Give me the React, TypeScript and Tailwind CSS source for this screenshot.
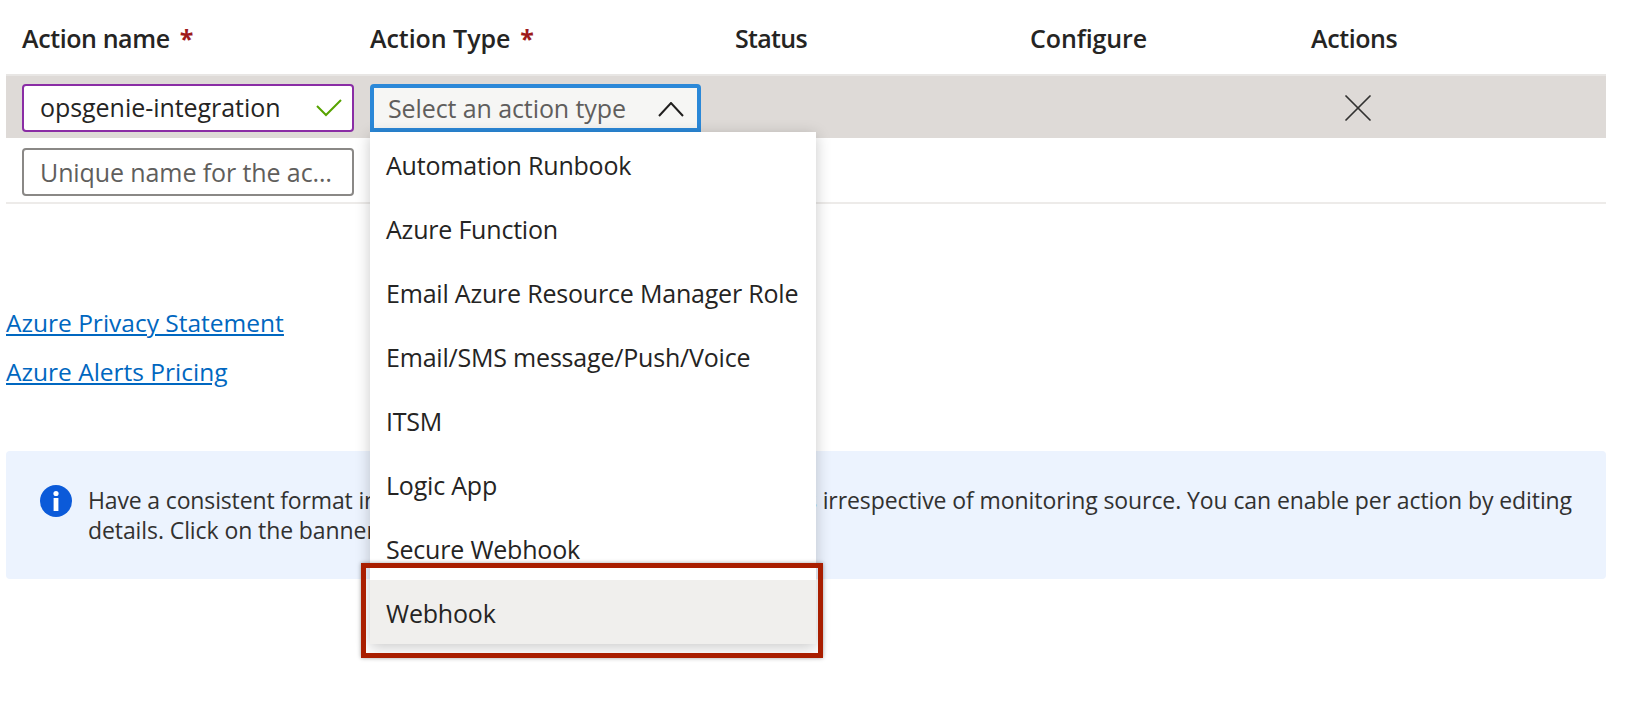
import React from "react";
import { X } from "lucide-react";

const actionTypes = [
  "Automation Runbook",
  "Azure Function",
  "Email Azure Resource Manager Role",
  "Email/SMS message/Push/Voice",
  "ITSM",
  "Logic App",
  "Secure Webhook",
  "Webhook",
];

function RequiredMark() {
  return <span className="ml-[10px] font-bold text-[#9e1b1b]">*</span>;
}

export default function App(): React.JSX.Element {
  return (
    <div className="relative h-[708px] w-[1648px] overflow-hidden bg-white font-['Open_Sans',sans-serif] text-[#252423]">
      {/* Table */}
      <div className="ml-[6px] w-[1600px]">
        <div className="flex h-[74px] items-center pt-1 text-[25px] font-semibold tracking-[-0.4px]">
          <div className="w-[364px] pl-4">
            Action name
            <RequiredMark />
          </div>
          <div className="w-[365px] tracking-[-0.05px]">
            Action Type
            <RequiredMark />
          </div>
          <div className="w-[295px] tracking-[-0.7px]">Status</div>
          <div className="w-[281px] tracking-[-0.1px]">Configure</div>
          <div>Actions</div>
        </div>

        <div className="flex h-[64px] items-center border-t-2 border-[#e8e6e4] bg-[#dedad7] pt-[2px] text-[25px]">
          <div className="w-[364px] pl-4">
            <div className="flex h-[48px] w-[332px] items-center justify-between rounded border-2 border-[#8a2da5] bg-white pl-4 pr-[10px] tracking-[-0.05px]">
              <span>opsgenie-integration</span>
              <svg width="26" height="18" viewBox="0 0 26 18" fill="none" stroke="#57a300" strokeWidth="2">
                <path d="M1 7 L10 16 L25 1" />
              </svg>
            </div>
          </div>
          <div className="flex h-[48px] w-[331px] items-center justify-between rounded-t border-4 border-[#2b88d8] bg-[#f6f6f4] pl-[14px] pr-[13px] pt-[2px] tracking-[-0.1px] text-[#605e5c]">
            <span>Select an action type</span>
            <svg width="26" height="15" viewBox="0 0 26 15" fill="none" stroke="#201f1e" strokeWidth="2">
              <path d="M1 14 L13 1 L25 14" />
            </svg>
          </div>
          <div className="ml-[633px] flex w-[48px] justify-center">
            <X className="h-12 w-12 text-[#323130]" strokeWidth={0.85} />
          </div>
        </div>

        <div className="h-[66px] border-b-2 border-[#edebe9] pl-4 pt-[10px]">
          <input
            readOnly
            placeholder="Unique name for the action"
            className="h-[48px] w-[332px] truncate rounded border-2 border-[#8a8886] pl-4 pr-[14px] text-[25px] tracking-[-0.1px] outline-none placeholder:text-[#605e5c]"
          />
        </div>
      </div>

      {/* Links */}
      <div className="ml-[6px] mt-[104px] flex flex-col gap-[19px] text-[24.5px] leading-[30px] text-[#0067c0] underline">
        <a href="#privacy" className="w-fit">Azure Privacy Statement</a>
        <a href="#pricing" className="w-fit">Azure Alerts Pricing</a>
      </div>

      {/* Info banner */}
      <div className="ml-[6px] mt-[64px] flex h-[128px] w-[1600px] gap-4 rounded bg-[#ecf3fe] pl-[34px] pt-[34px] text-[23px] leading-[30px] tracking-[-0.09px] text-[#323130]">
        <svg width="32" height="32" viewBox="0 0 32 32" className="shrink-0">
          <circle cx="16" cy="16" r="16" fill="#0b5ad9" />
          <circle cx="16" cy="8.5" r="2.6" fill="#fff" />
          <rect x="13.6" y="13" width="4.8" height="13" fill="#fff" />
        </svg>
        <p className="whitespace-nowrap">
          <span className="tracking-[-0.15px]">Have a consistent format in emails, notifications and other endpoints </span>
          irrespective of monitoring source. You can enable per action by editing
          <br />
          details. Click on the banner to know more
        </p>
      </div>

      {/* Dropdown menu */}
      <div className="absolute left-[370px] top-[132px] w-[446px] bg-white text-[25px] tracking-[-0.2px] shadow-[0_3px_14px_rgba(0,0,0,0.22)]">
        {actionTypes.map((type) => (
          <div
            key={type}
            className={`flex h-[64px] items-center pl-4 pt-[3px] ${type === "Webhook" ? "bg-[#f0efed]" : ""}`}
          >
            {type}
          </div>
        ))}
      </div>

      {/* Red highlight around Webhook */}
      <div className="absolute left-[361px] top-[563px] h-[95px] w-[462px] border-[5px] border-[#a91e00] shadow-[0_0_4px_rgba(0,0,0,0.35)]" />
    </div>
  );
}
